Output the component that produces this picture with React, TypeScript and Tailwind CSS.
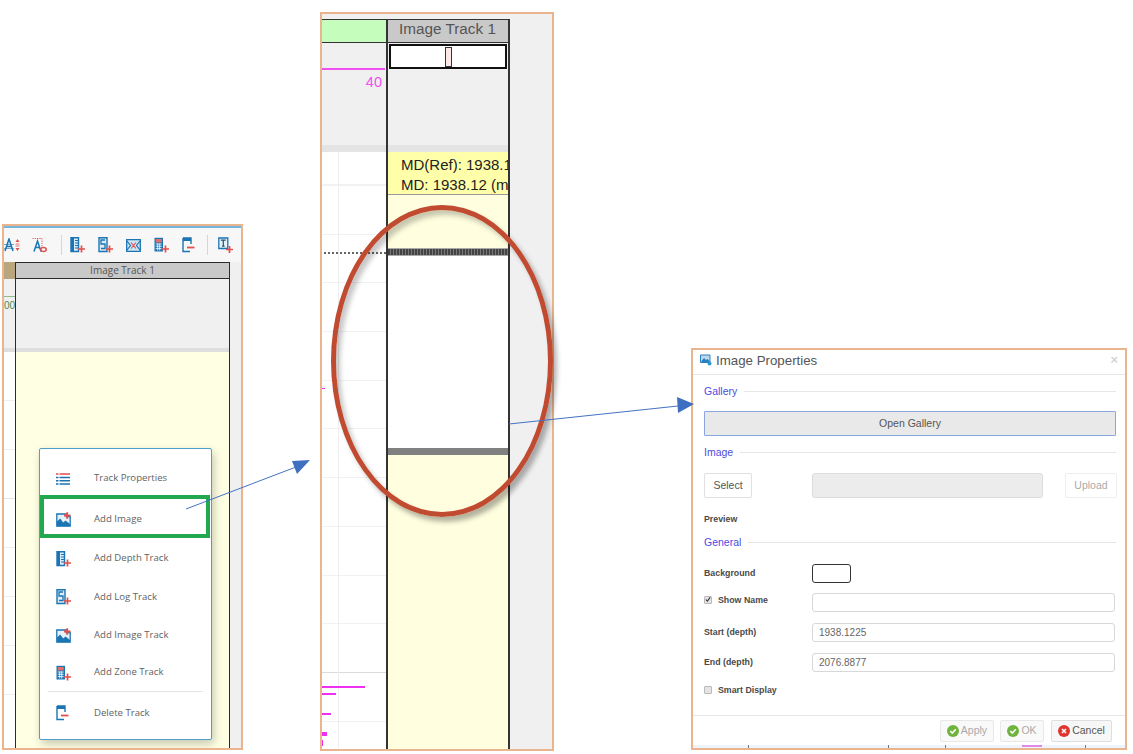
import React from 'react';

const PLUS = '#e0504c';
const BLUE = '#1b74b4';

function Plus({ x = 9, y = 10, size = 7 }: { x?: number; y?: number; size?: number }) {
  const half = size / 2;
  return <path d={`M${x} ${y + half}h${size}M${x + half} ${y}v${size}`} stroke={PLUS} strokeWidth="1.7" fill="none" />;
}

function DepthIcon() {
  return (
    <svg width="15" height="16" viewBox="0 0 15 16">
      <path d="M1 .8h7.5v13.7H1z" fill="#dcecf7" stroke={BLUE} strokeWidth="1.4" />
      <path d="M1 .8h3v13.7H1z" fill={BLUE} />
      <path d="M5 3.5h3M5 6h3M5 8.5h3M5 11h3" stroke={BLUE} strokeWidth="1.2" />
      <Plus x={8} y={8.5} />
    </svg>
  );
}

function LogIcon() {
  return (
    <svg width="15" height="16" viewBox="0 0 15 16">
      <path d="M1 .8h8v13.7H1z" fill="#dcecf7" stroke={BLUE} strokeWidth="1.4" />
      <path d="M7 3H3v4h4v4.5H3" fill="none" stroke={BLUE} strokeWidth="1.3" />
      <Plus x={8} y={8.5} />
    </svg>
  );
}

function ImageIcon() {
  return (
    <svg width="15" height="15" viewBox="0 0 15 15">
      <path d="M.8 2h9.5v2.5h3.9v9.7H.8z" fill="#e6f1f9" stroke={BLUE} strokeWidth="1.3" />
      <path d="M1 14.2V9.5L4.2 6.5l3 4 2.3-2 4.5 3.5v2.2z" fill={BLUE} />
      <path d="M8 3.5h6.5M11.2 .2v6.6" stroke={PLUS} strokeWidth="1.9" />
    </svg>
  );
}

function ZoneIcon() {
  return (
    <svg width="15" height="16" viewBox="0 0 15 16">
      <path d="M.5 .8h8.5v13.7H.5z" fill={BLUE} />
      <path d="M1.7 2h6v3.5h-6z" fill="#e2706c" />
      <path d="M1.7 7h6M1.7 9.3h6M1.7 11.6h6M3.7 6.5v7M5.7 6.5v7" stroke="#fff" strokeWidth=".8" />
      <Plus x={8} y={8.5} />
    </svg>
  );
}

function DeleteIcon() {
  return (
    <svg width="13" height="16" viewBox="0 0 13 16">
      <path d="M1 1h8v6M1 1v13.5h7" fill="none" stroke={BLUE} strokeWidth="1.4" />
      <path d="M1 1h8v3H1z" fill={BLUE} />
      <path d="M5 10.5h7.5" stroke={PLUS} strokeWidth="1.8" />
    </svg>
  );
}

function ListIcon() {
  return (
    <svg width="14" height="12" viewBox="0 0 14 12">
      <path d="M0 1h2.5M3.5 1H14" stroke={PLUS} strokeWidth="1.5" />
      <path d="M0 4.4h2.5M3.5 4.4H14M0 7.8h2.5M3.5 7.8H14M0 11h2.5M3.5 11H14" stroke={BLUE} strokeWidth="1.5" />
    </svg>
  );
}

function TextAddIcon() {
  return (
    <svg width="15" height="16" viewBox="0 0 15 16">
      <path d="M.8 1h9v10.5h-9z" fill="#e6f1f9" stroke={BLUE} strokeWidth="1.3" />
      <path d="M2.8 3.2h5M5.3 3.2v6M4 9.2h2.6" stroke="#2b4f6b" strokeWidth="1.2" fill="none" />
      <Plus x={8} y={9} />
    </svg>
  );
}

function CrossTrackIcon() {
  return (
    <svg width="15" height="13" viewBox="0 0 15 13">
      <path d="M.7.7h13.6v11.6H.7z" fill="#cfe4f3" stroke={BLUE} strokeWidth="1.3" />
      <path d="M1 2l3.5 4.5L1 11M14 2l-3.5 4.5L14 11" fill="none" stroke={BLUE} strokeWidth="1.2" />
      <path d="M5 3.5l2.5 3-2.5 3M10 3.5l-2.5 3 2.5 3" fill="none" stroke={PLUS} strokeWidth="1.1" />
    </svg>
  );
}

function SortIcon() {
  return (
    <svg width="17" height="14" viewBox="0 0 17 14">
      <path d="M1 13L5 1l4 12M2.5 8.5h5" fill="none" stroke={BLUE} strokeWidth="1.5" />
      <path d="M0 6.5h10M0 10.5h10" stroke={BLUE} strokeWidth=".6" />
      <path d="M11.5 4l2-3 2 3zM11.5 10l2 3 2-3z" fill={PLUS} />
      <path d="M11.5 6h4M11.5 8h4" stroke={PLUS} strokeWidth=".8" />
    </svg>
  );
}

function MarkerIcon() {
  return (
    <svg width="15" height="15" viewBox="0 0 15 15">
      <path d="M.5.5h9.5v9" fill="none" stroke={PLUS} strokeWidth=".9" strokeDasharray="1.3 1" />
      <path d="M2 13.5L5.5 3 9 13.5M3.2 9.5h4.6" fill="none" stroke={BLUE} strokeWidth="1.5" />
      <ellipse cx="11.5" cy="11.5" rx="2.7" ry="2" fill="none" stroke={PLUS} strokeWidth="1.5" />
    </svg>
  );
}

function Toolbar() {
  return (
    <div className="h-[36px] shrink-0 flex items-center bg-[#f7f7f7] border-t-2 border-[#74b6dc]">
      <SortIcon />
      <div className="ml-[11px] flex"><MarkerIcon /></div>
      <div className="w-px h-[20px] bg-[#d6d6d6] ml-[14px] mr-[8px]" />
      <div className="flex items-center gap-[13px]">
        <DepthIcon />
        <LogIcon />
        <CrossTrackIcon />
        <ZoneIcon />
        <DeleteIcon />
      </div>
      <div className="w-px h-[20px] bg-[#d6d6d6] ml-[12px] mr-[10px]" />
      <TextAddIcon />
    </div>
  );
}

const MENU_ITEMS = [
  { label: 'Track Properties', icon: <ListIcon />, h: 'h-[41px]' },
  { label: 'Add Image', icon: <ImageIcon />, h: 'h-[40px]' },
  { label: 'Add Depth Track', icon: <DepthIcon />, h: 'h-[39px]' },
  { label: 'Add Log Track', icon: <LogIcon />, h: 'h-[38px]' },
  { label: 'Add Image Track', icon: <ImageIcon />, h: 'h-[38px]' },
  { label: 'Add Zone Track', icon: <ZoneIcon />, h: 'h-[37px]' },
];

function ContextMenu() {
  return (
    <div className="absolute left-[35px] top-[222px] w-[173px] h-[292px] bg-white border border-[#4f9fca] rounded-[2px] shadow-[2px_4px_10px_rgba(0,0,0,0.22)] pt-[9px] font-['Open_Sans',sans-serif] text-[9.6px] text-[#636363]">
      {MENU_ITEMS.map((item) => (
        <div key={item.label} className={`${item.h} flex items-center`}>
          <div className="w-[54px] pl-[16px] flex items-center">{item.icon}</div>
          <span>{item.label}</span>
        </div>
      ))}
      <div className="h-px bg-[#e2e2e2] mx-[8px]" />
      <div className="h-[42px] flex items-center">
        <div className="w-[54px] pl-[16px] flex items-center"><DeleteIcon /></div>
        <span>Delete Track</span>
      </div>
      {/* green highlight round Add Image */}
      <div className="absolute left-[0px] top-[46px] w-[170px] h-[43px] border-[4px] border-[#22a84f]" />
    </div>
  );
}

function TrackPanelSmall() {
  return (
    <div className="absolute left-[2px] top-[224px] w-[241px] h-[526px] border-2 border-[#e9b48e] bg-[#f0f0f0] flex flex-col overflow-hidden">
      <Toolbar />
      <div className="flex-1 flex min-h-0 relative">
        <div className="w-[11px] shrink-0 flex flex-col">
          <div className="h-[17px] bg-[#b9a67e]" />
          <div className="h-[69px] bg-[#f0f0f0] relative overflow-hidden">
            <div className="h-px bg-[#8fb98f] mt-[17px]" />
            <div className="text-[10px] leading-[10px] text-[#4d8a4d] font-['Liberation_Sans',sans-serif] text-right mt-[4px]">00</div>
          </div>
          <div className="h-[4px] bg-[#dedede]" />
          <div className="flex-1 bg-white flex flex-col">
            <div className="h-[49px] border-b border-[#eee]" />
            <div className="h-[49px] border-b border-[#eee]" />
            <div className="h-[49px] border-b border-[#e4e4e4]" />
            <div className="h-[49px] border-b border-[#eee]" />
            <div className="h-[49px] border-b border-[#eee]" />
            <div className="h-[49px] border-b border-[#eee]" />
            <div className="h-[49px] border-b border-[#eee]" />
          </div>
        </div>
        <div className="w-[215px] shrink-0 flex flex-col border-x border-[#2b2b2b]">
          <div className="h-[17px] bg-[#c9c9c9] border-y border-[#2b2b2b] flex items-center justify-center font-['Open_Sans',sans-serif] text-[10px] text-[#555]">Image Track 1</div>
          <div className="h-[69px] bg-[#f0f0f0]" />
          <div className="h-[4px] bg-[#dedede]" />
          <div className="flex-1 bg-[#ffffe3]" />
        </div>
      </div>
      <ContextMenu />
    </div>
  );
}

function TrackPanelLarge() {
  return (
    <div className="absolute left-[320px] top-[12px] w-[234px] h-[739px] border-2 border-[#e9b48e] bg-[#f0f0f0] flex flex-col overflow-hidden font-['Liberation_Sans',sans-serif]">
      <div className="h-[5px] shrink-0" />
      <div className="flex-1 flex min-h-0">
        <div className="w-[64px] shrink-0 flex flex-col">
          <div className="h-[24px] bg-[#c5fdbd] border-t border-[#333] border-b" />
          <div className="h-[102px] bg-[#f0f0f0] relative">
            <div className="h-[2px] bg-[#f14ff0] mt-[25px] mr-[1px]" />
            <div className="text-[14.5px] leading-[16px] text-[#f14ff0] text-right pr-[4px] mt-[4px]">40</div>
          </div>
          <div className="h-[7px] bg-[#e4e4e4]" />
          <div className="flex-1 bg-white relative flex flex-col">
            <div className="h-[34px] shrink-0 border-b-2 border-[#f2f2f2]" />
            {Array.from({ length: 11 }).map((_, i) => (
              <div key={i} className={`h-[48.7px] shrink-0 border-b ${i === 9 ? 'border-[#dcdcdc]' : 'border-[#f1f1f1]'}`} />
            ))}
            <div className="absolute left-[16px] top-0 bottom-0 w-px bg-[#eeeeee]" />
            {/* dotted depth marker */}
            <div className="absolute left-[2px] right-0 top-[100px] border-t-2 border-dotted border-[#666]" />
            <div className="absolute left-0 top-[236px] w-[3px] h-[1px] bg-[#f030f0]" />
            <div className="absolute left-0 top-[534px] w-[43px] h-[1.5px] bg-[#f030f0]" />
            <div className="absolute left-0 top-[541px] w-[14px] h-[2px] bg-[#f030f0]" />
            <div className="absolute left-0 top-[561px] w-[9px] h-[2px] bg-[#f030f0]" />
            <div className="absolute left-0 top-[580px] w-[5px] h-[4px] bg-[#f030f0]" />
            <div className="absolute left-0 top-[588px] w-[1px] h-[6px] bg-[#f030f0]" />
          </div>
        </div>
        <div className="w-[124px] shrink-0 flex flex-col border-x-2 border-[#333] overflow-hidden">
          <div className="h-[24px] bg-[#c9c9c9] border-t border-b border-[#333] flex items-center pl-[11px] pb-[4px] text-[15.3px] text-[#555] leading-none">Image Track 1</div>
          <div className="h-[102px] bg-[#f0f0f0] pt-[1px] px-[1px]">
            <div className="h-[25px] bg-white border-2 border-[#111] flex items-center justify-center">
              <div className="w-[7px] h-[20px] bg-[#fde8e8] border-[1.5px] border-[#333]" />
            </div>
          </div>
          <div className="h-[7px] bg-[#e4e4e4]" />
          <div className="h-[43px] bg-[#ffffa9] border-b border-[#999] pl-[13px] pt-[3px] text-[15px] leading-[19.5px] text-[#222] whitespace-nowrap overflow-hidden">
            <div>MD(Ref): 1938.12</div>
            <div>MD: 1938.12 (m)</div>
          </div>
          <div className="h-[53px] bg-[#ffffe0]" />
          <div className="h-[8px] border-y border-[#aaa] bg-[repeating-linear-gradient(90deg,#444_0,#444_2px,#777_2px,#777_3px)]" />
          <div className="h-[192px] bg-white" />
          <div className="h-[7px] bg-[#808080]" />
          <div className="flex-1 bg-[#ffffe0]" />
        </div>
      </div>
    </div>
  );
}

function Legend({ title }: { title: string }) {
  return (
    <div className="flex items-center gap-[7px] h-[14px]">
      <span className="text-[10.5px] text-[#4c4ce0] leading-none">{title}</span>
      <div className="flex-1 h-px bg-[#e6e6e6]" />
    </div>
  );
}

function FieldLabel({ children }: { children: React.ReactNode }) {
  return <span className="text-[8.8px] font-bold text-[#4a4a4a] leading-none">{children}</span>;
}

function TextBox({ value }: { value?: string }) {
  return (
    <div className="w-[303px] h-[19px] border border-[#d8d8d8] rounded-[3px] bg-white pl-[6px] flex items-center text-[10px] text-[#666]">
      {value}
    </div>
  );
}

function Check({ checked }: { checked?: boolean }) {
  return (
    <div className="w-[8px] h-[8px] bg-[#e4e4e4] border border-[#bbb] rounded-[1px] flex items-center justify-center">
      {checked && (
        <svg width="7" height="7" viewBox="0 0 7 7">
          <path d="M1 3.5l1.7 2L6 1" fill="none" stroke="#333" strokeWidth="1.3" />
        </svg>
      )}
    </div>
  );
}

function StatusDot({ kind }: { kind: 'ok' | 'cancel' }) {
  return (
    <svg width="12" height="12" viewBox="0 0 12 12">
      <circle cx="6" cy="6" r="6" fill={kind === 'ok' ? '#6fb43f' : '#e0352f'} />
      {kind === 'ok' ? (
        <path d="M3.3 6l2 2.1L8.8 4.2" fill="none" stroke="#fff" strokeWidth="1.6" />
      ) : (
        <path d="M4 4l4 4M8 4l-4 4" stroke="#fff" strokeWidth="1.6" />
      )}
    </svg>
  );
}

function ImagePropsDialog() {
  return (
    <div className="absolute left-[691px] top-[348px] w-[436px] h-[402px] border-2 border-[#e9b48e] bg-white flex flex-col font-['Liberation_Sans',sans-serif] overflow-hidden">
      <div className="h-[25px] shrink-0 border-b border-[#e6e6e6] flex items-center pl-[7px] pr-[7px] pb-[3px]">
        <svg width="12" height="12" viewBox="0 0 12 12" className="mr-[4px] -mt-[1px]">
          <path d="M.5 1h9.5v7.5H.5z" fill="#bcd9ef" stroke="#2a7fbd" />
          <path d="M1.5 7l2.5-3 2 2 1.5-1 2 2v1.5h-8z" fill="#2a7fbd" />
          <circle cx="9.5" cy="9.5" r="2" fill="#2a9bd0" />
        </svg>
        <span className="text-[13.3px] text-[#555] leading-none">Image Properties</span>
        <span className="ml-auto text-[13px] leading-none text-[#d4d4d4] font-bold -mt-[2px]">×</span>
      </div>
      <div className="flex-1 pl-[11px] pr-[9px] pt-[9px] flex flex-col">
        <Legend title="Gallery" />
        <button className="mt-[13px] w-[412px] h-[25px] bg-[#e9e9e9] border border-[#8aa6e0] rounded-[1px] text-[10.5px] text-[#555] shrink-0">Open Gallery</button>
        <div className="mt-[9px]"><Legend title="Image" /></div>
        <div className="mt-[14px] flex items-center">
          <button className="w-[48px] h-[25px] border border-[#e0e0e0] rounded-[2px] text-[10.5px] text-[#555] shrink-0">Select</button>
          <div className="ml-[60px] w-[231px] h-[25px] bg-[#ececec] border border-[#dcdcdc] rounded-[3px] shrink-0" />
          <button className="ml-[22px] w-[52px] h-[25px] border border-[#eeeeee] rounded-[2px] text-[10.5px] text-[#aaa] shrink-0">Upload</button>
        </div>
        <div className="mt-[15px] h-[12px] flex items-center"><FieldLabel>Preview</FieldLabel></div>
        <div className="mt-[10px]"><Legend title="General" /></div>
        <div className="mt-[14px] h-[20px] flex items-center">
          <div className="w-[108px] flex items-center"><FieldLabel>Background</FieldLabel></div>
          <div className="w-[39px] h-[19px] border border-[#333] rounded-[3px]" />
        </div>
        <div className="mt-[10px] h-[19px] flex items-center">
          <div className="w-[108px] flex items-center gap-[6px] -mt-[5px]"><Check checked /><FieldLabel>Show Name</FieldLabel></div>
          <TextBox />
        </div>
        <div className="mt-[11px] h-[19px] flex items-center">
          <div className="w-[108px] flex items-center"><FieldLabel>Start (depth)</FieldLabel></div>
          <TextBox value="1938.1225" />
        </div>
        <div className="mt-[11px] h-[19px] flex items-center">
          <div className="w-[108px] flex items-center"><FieldLabel>End (depth)</FieldLabel></div>
          <TextBox value="2076.8877" />
        </div>
        <div className="mt-[11px] h-[14px] flex items-center gap-[6px]"><Check /><FieldLabel>Smart Display</FieldLabel></div>
      </div>
      <div className="h-[30px] shrink-0 border-t border-[#e6e6e6] flex items-start justify-end pt-[4px] pr-[13px] gap-[6px] text-[10.5px]">
        <div className="w-[54px] h-[22px] border border-[#e8e8e8] rounded-[2px] bg-[#f9f9f9] flex items-center justify-center gap-[2px] text-[#aaa]"><StatusDot kind="ok" />Apply</div>
        <div className="w-[44px] h-[22px] border border-[#e8e8e8] rounded-[2px] bg-[#f9f9f9] flex items-center justify-center gap-[2px] text-[#aaa]"><StatusDot kind="ok" />OK</div>
        <div className="w-[61px] h-[22px] border border-[#dedede] rounded-[2px] bg-[#f7f7f7] flex items-center justify-center gap-[2px] text-[#555] ml-[1px]"><StatusDot kind="cancel" />Cancel</div>
      </div>
      <div className="h-[3px] shrink-0 bg-[#eef4fb] relative">
        <div className="absolute left-[55px] top-0 w-px h-[3px] bg-[#777]" />
        <div className="absolute left-[195px] top-0 w-px h-[3px] bg-[#777]" />
        <div className="absolute left-[252px] top-0 w-px h-[3px] bg-[#777]" />
        <div className="absolute left-[392px] top-0 w-px h-[3px] bg-[#777]" />
        <div className="absolute left-[329px] top-0 w-[20px] h-[2px] bg-[#e28ae8]" />
      </div>
    </div>
  );
}

function Overlays() {
  return (
    <>
      {/* callout ellipse on the track */}
      <div className="absolute left-[331px] top-[205px] w-[222px] h-[312px] rounded-[50%] border-[5px] border-[#c04b30] shadow-[4px_5px_5px_rgba(0,0,0,0.3),inset_4px_5px_5px_rgba(0,0,0,0.22)]" />
      {/* connector arrows */}
      <svg className="absolute left-0 top-0 pointer-events-none" width="1133" height="754" viewBox="0 0 1133 754">
        <path d="M186 509L296 467" stroke="#4472c4" strokeWidth="1" fill="none" />
        <path d="M310 460L292 461L297 474z" fill="#3f6fc0" />
        <path d="M509 424L678 406" stroke="#4472c4" strokeWidth="1" fill="none" />
        <path d="M694 404L677 397L678 413z" fill="#3f6fc0" />
      </svg>
    </>
  );
}

export default function App() {
  return (
    <div className="relative w-[1133px] h-[754px] bg-white overflow-hidden">
      <TrackPanelSmall />
      <TrackPanelLarge />
      <ImagePropsDialog />
      <Overlays />
    </div>
  );
}
